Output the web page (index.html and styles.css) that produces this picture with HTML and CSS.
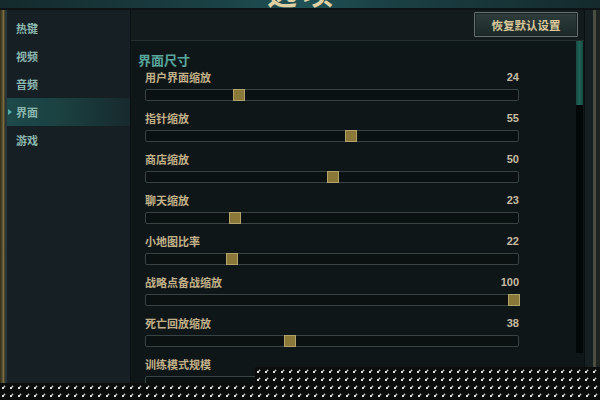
FILE: index.html
```html
<!DOCTYPE html>
<html lang="zh">
<head>
<meta charset="utf-8">
<link rel="stylesheet" href="styles.css">
</head>
<body>
<div class="window">
  <div class="topbar"><div class="title">选项</div></div>
  <div class="main">
    <div class="frame-left"></div>
    <div class="frame-line"></div>
    <nav class="sidebar">
      <div class="nav-item">热键</div>
      <div class="nav-item">视频</div>
      <div class="nav-item">音频</div>
      <div class="nav-item active">界面</div>
      <div class="nav-item">游戏</div>
    </nav>
    <section class="panel">
      <div class="panel-head">
        <button class="reset-btn">恢复默认设置</button>
      </div>
      <div class="panel-body">
        <div class="content">
          <div class="section-title">界面尺寸</div>
          <div class="row">
            <div class="row-top"><span class="label">用户界面缩放</span><span class="value">24</span></div>
            <div class="track"><div class="thumb" style="left: calc(24 * 3.62px)"></div></div>
          </div>
          <div class="row">
            <div class="row-top"><span class="label">指针缩放</span><span class="value">55</span></div>
            <div class="track"><div class="thumb" style="left: calc(55 * 3.62px)"></div></div>
          </div>
          <div class="row">
            <div class="row-top"><span class="label">商店缩放</span><span class="value">50</span></div>
            <div class="track"><div class="thumb" style="left: calc(50 * 3.62px)"></div></div>
          </div>
          <div class="row">
            <div class="row-top"><span class="label">聊天缩放</span><span class="value">23</span></div>
            <div class="track"><div class="thumb" style="left: calc(23 * 3.62px)"></div></div>
          </div>
          <div class="row">
            <div class="row-top"><span class="label">小地图比率</span><span class="value">22</span></div>
            <div class="track"><div class="thumb" style="left: calc(22 * 3.62px)"></div></div>
          </div>
          <div class="row">
            <div class="row-top"><span class="label">战略点备战缩放</span><span class="value">100</span></div>
            <div class="track"><div class="thumb" style="left: calc(100 * 3.62px)"></div></div>
          </div>
          <div class="row">
            <div class="row-top"><span class="label">死亡回放缩放</span><span class="value">38</span></div>
            <div class="track"><div class="thumb" style="left: calc(38 * 3.62px)"></div></div>
          </div>
          <div class="row">
            <div class="row-top"><span class="label">训练模式规模</span><span class="value"></span></div>
            <div class="track"></div>
          </div>
        </div>
        <div class="scrollbar"><div class="scroll-thumb"></div></div>
      </div>
    </section>
    <div class="frame-right"><div class="fr-a"></div><div class="fr-b"></div><div class="fr-c"></div></div>
  </div>
</div>
<div class="dither"></div>
<div class="dither-step"></div>
</body>
</html>
```

FILE: styles.css
```css
* { box-sizing: border-box; }
html, body {
  margin: 0;
  padding: 0;
  width: 600px;
  height: 400px;
  overflow: hidden;
  background: #0b0d0d;
  font-family: "Noto Sans CJK SC", "Noto Sans", sans-serif;
}
.window {
  height: 383px;
  display: flex;
  flex-direction: column;
  background: #101719;
}
.topbar {
  height: 10px;
  flex: none;
  overflow: hidden;
  background: linear-gradient(90deg, #142a2c 0%, #1a4044 35%, #1f5256 50%, #1a4044 65%, #142a2c 100%);
  border-bottom: 2px solid #0e1416;
  display: flex;
  justify-content: center;
}
.title {
  font-size: 30px;
  line-height: 30px;
  font-weight: 700;
  color: #e0d0a2;
  letter-spacing: 6px;
  margin-top: -24px;
  margin-left: 6px;
}
.main {
  flex: 1;
  display: flex;
  min-height: 0;
}
.frame-left {
  width: 5px;
  background: linear-gradient(90deg, #2e2a1a 0%, #5c5330 50%, #7a6c40 70%, #3a3420 100%);
}
.frame-line {
  width: 2px;
  background: #26363a;
}
.sidebar {
  width: 123px;
  background: #161f23;
  padding-top: 4px;
  display: flex;
  flex-direction: column;
}
.nav-item {
  height: 28px;
  line-height: 28px;
  padding-left: 9px;
  font-size: 11px;
  font-weight: 700;
  color: #8cb8b0;
  position: relative;
}
.nav-item.active {
  background: linear-gradient(90deg, #1e4a4a 0%, #1b4040 45%, #17292d 100%);
}
.nav-item.active::before {
  content: "";
  position: absolute;
  left: 1px;
  top: 11px;
  border-left: 4px solid #4fb0a8;
  border-top: 3px solid transparent;
  border-bottom: 3px solid transparent;
}
.panel {
  width: 454px;
  display: flex;
  flex-direction: column;
  background: #0f1618;
  border-left: 1px solid #0b1012;
}
.panel-head {
  height: 31px;
  flex: none;
  background: #141b1d;
  border-bottom: 1px solid #24302f;
  display: flex;
  justify-content: flex-end;
  align-items: flex-start;
  padding: 2px 6px 0 0;
}
.reset-btn {
  width: 104px;
  height: 25px;
  padding: 0;
  font-family: inherit;
  font-size: 11.5px;
  font-weight: 700;
  color: #d8c89c;
  background: linear-gradient(180deg, #2e3c3c 0%, #243232 55%, #1c2828 100%);
  border: 1px solid #66706c;
  box-shadow: inset 0 0 0 1px #1a2222;
  border-radius: 1px;
}
.panel-body {
  flex: 1;
  display: flex;
  min-height: 0;
}
.content {
  flex: 1;
  padding: 10px 0 0 14px;
  overflow: hidden;
}
.section-title {
  font-size: 13px;
  line-height: 18px;
  font-weight: 700;
  color: #58a69c;
  margin-left: -7px;
}
.row {
  width: 374px;
  height: 41px;
}
.row-top {
  display: flex;
  justify-content: space-between;
  height: 16px;
  line-height: 17px;
  margin-bottom: 4px;
}
.label {
  font-size: 11px;
  font-weight: 700;
  color: #c2b28a;
}
.value {
  font-family: "Liberation Sans", Arial, sans-serif;
  font-size: 11px;
  font-weight: 700;
  color: #c4bca4;
}
.track {
  position: relative;
  height: 12px;
  border: 1.5px solid #3a4343;
  border-radius: 2px;
  background: #0b1011;
}
.thumb {
  position: absolute;
  top: -1.5px;
  width: 12px;
  height: 12px;
  background: #8a7838;
  border: 1px solid #b2a26c;
}
.scrollbar {
  width: 7px;
  margin-right: 1px;
  background: #040707;
  margin-bottom: 30px;
}
.scroll-thumb {
  height: 64px;
  background: linear-gradient(90deg, #164a42 0%, #1f6456 50%, #164a42 100%);
}
.frame-right {
  flex: 1;
  display: flex;
}
.fr-a { width: 9px; background: #162022; border-left: 1px solid #0a0f10; }
.fr-b { width: 3px; background: #4a4e3e; }
.fr-c { flex: 1; background: #1e2422; }
.dither,
.dither-step {
  background-color: #0b0d0d;
  background-image:
    radial-gradient(circle at 3px 5px, #e0e0e0 0.8px, transparent 1.3px),
    radial-gradient(circle at 4.5px 3.5px, #c8c8c8 0.7px, transparent 1.2px);
  background-size: 8px 8px;
}
.dither {
  height: 17px;
}
.dither-step {
  position: absolute;
  left: 255px;
  top: 367px;
  width: 345px;
  height: 16px;
}
```
